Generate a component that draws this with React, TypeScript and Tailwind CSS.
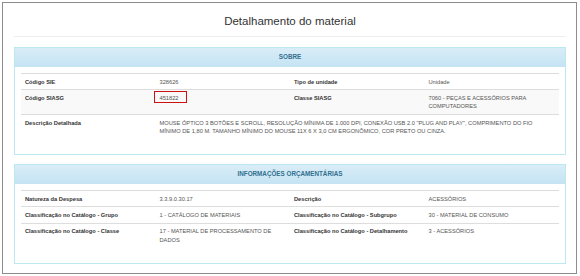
import React from "react";

type Cell = { label: string; value: React.ReactNode; span?: boolean };

function Row({ cells, striped }: { cells: Cell[]; striped?: boolean }) {
  return (
    <div
      className={`grid grid-cols-4 border-t border-[#dddddd] ${striped ? "bg-[#f9f9f9]" : ""}`}
    >
      {cells.map((c, i) => (
        <React.Fragment key={i}>
          <div className="px-[4px] py-[3.5px] font-bold text-[#333333]">{c.label}</div>
          <div className={`px-[4px] py-[3.5px] text-[#555555] ${c.span ? "col-span-3" : ""}`}>
            {c.value}
          </div>
        </React.Fragment>
      ))}
    </div>
  );
}

function Panel({ title, children }: { title: string; children: React.ReactNode }) {
  return (
    <section className="border border-[#bce8f1] bg-white">
      <div className="flex h-[19px] items-center justify-center bg-gradient-to-b from-[#d9edf7] to-[#c4e3f3] text-[6.3px] font-bold uppercase text-[#31708f]">
        {title}
      </div>
      <div className="px-[6px] pb-[7px] pt-[6px]">
        <div className="mb-[8px]">{children}</div>
      </div>
    </section>
  );
}

export default function App() {
  return (
    <div className="h-[276px] w-[580px] bg-white pl-[2px] pt-[2px] font-['Liberation_Sans',Arial,sans-serif] text-[5.7px] leading-[8.4px]">
      <div className="flex h-[272px] w-[575px] flex-col border border-[#8c8c8c] pl-[11px] pr-[10px]">
        <h1 className="mt-[10px] border-b border-[#eeeeee] pb-[7px] text-center text-[11.5px] font-normal leading-[16px] text-[#333333]">
          Detalhamento do material
        </h1>

        <div className="mt-[10px] flex flex-col gap-[9px]">
          <Panel title="Sobre">
            <Row
              cells={[
                { label: "Código SIE", value: "328626" },
                { label: "Tipo de unidade", value: "Unidade" },
              ]}
            />
            <Row
              striped
              cells={[
                {
                  label: "Código SIASG",
                  value: (
                    <span className="relative inline-block">
                      451822
                      <span className="absolute left-[-5.5px] top-[-3px] h-[12.5px] w-[32.5px] border-[1.5px] border-[#cc1111]" />
                    </span>
                  ),
                },
                { label: "Classe SIASG", value: "7060 - PEÇAS E ACESSÓRIOS PARA COMPUTADORES" },
              ]}
            />
            <Row
              cells={[
                {
                  label: "Descrição Detalhada",
                  span: true,
                  value:
                    'MOUSE ÓPTICO 3 BOTÕES E SCROLL, RESOLUÇÃO MÍNIMA DE 1.000 DPI, CONEXÃO USB 2.0 "PLUG AND PLAY", COMPRIMENTO DO FIO MÍNIMO DE 1,80 M. TAMANHO MÍNIMO DO MOUSE 11X 6 X 3,0 CM ERGONÔMICO, COR PRETO OU CINZA.',
                },
              ]}
            />
          </Panel>

          <Panel title="Informações Orçamentárias">
            <Row
              cells={[
                { label: "Natureza da Despesa", value: "3.3.9.0.30.17" },
                { label: "Descrição", value: "ACESSÓRIOS" },
              ]}
            />
            <Row
              cells={[
                { label: "Classificação no Catálogo - Grupo", value: "1 - CATÁLOGO DE MATERIAIS" },
                { label: "Classificação no Catálogo - Subgrupo", value: "30 - MATERIAL DE CONSUMO" },
              ]}
            />
            <Row
              cells={[
                { label: "Classificação no Catálogo - Classe", value: "17 - MATERIAL DE PROCESSAMENTO DE DADOS" },
                { label: "Classificação no Catálogo - Detalhamento", value: "3 - ACESSÓRIOS" },
              ]}
            />
          </Panel>
        </div>
      </div>
    </div>
  );
}
